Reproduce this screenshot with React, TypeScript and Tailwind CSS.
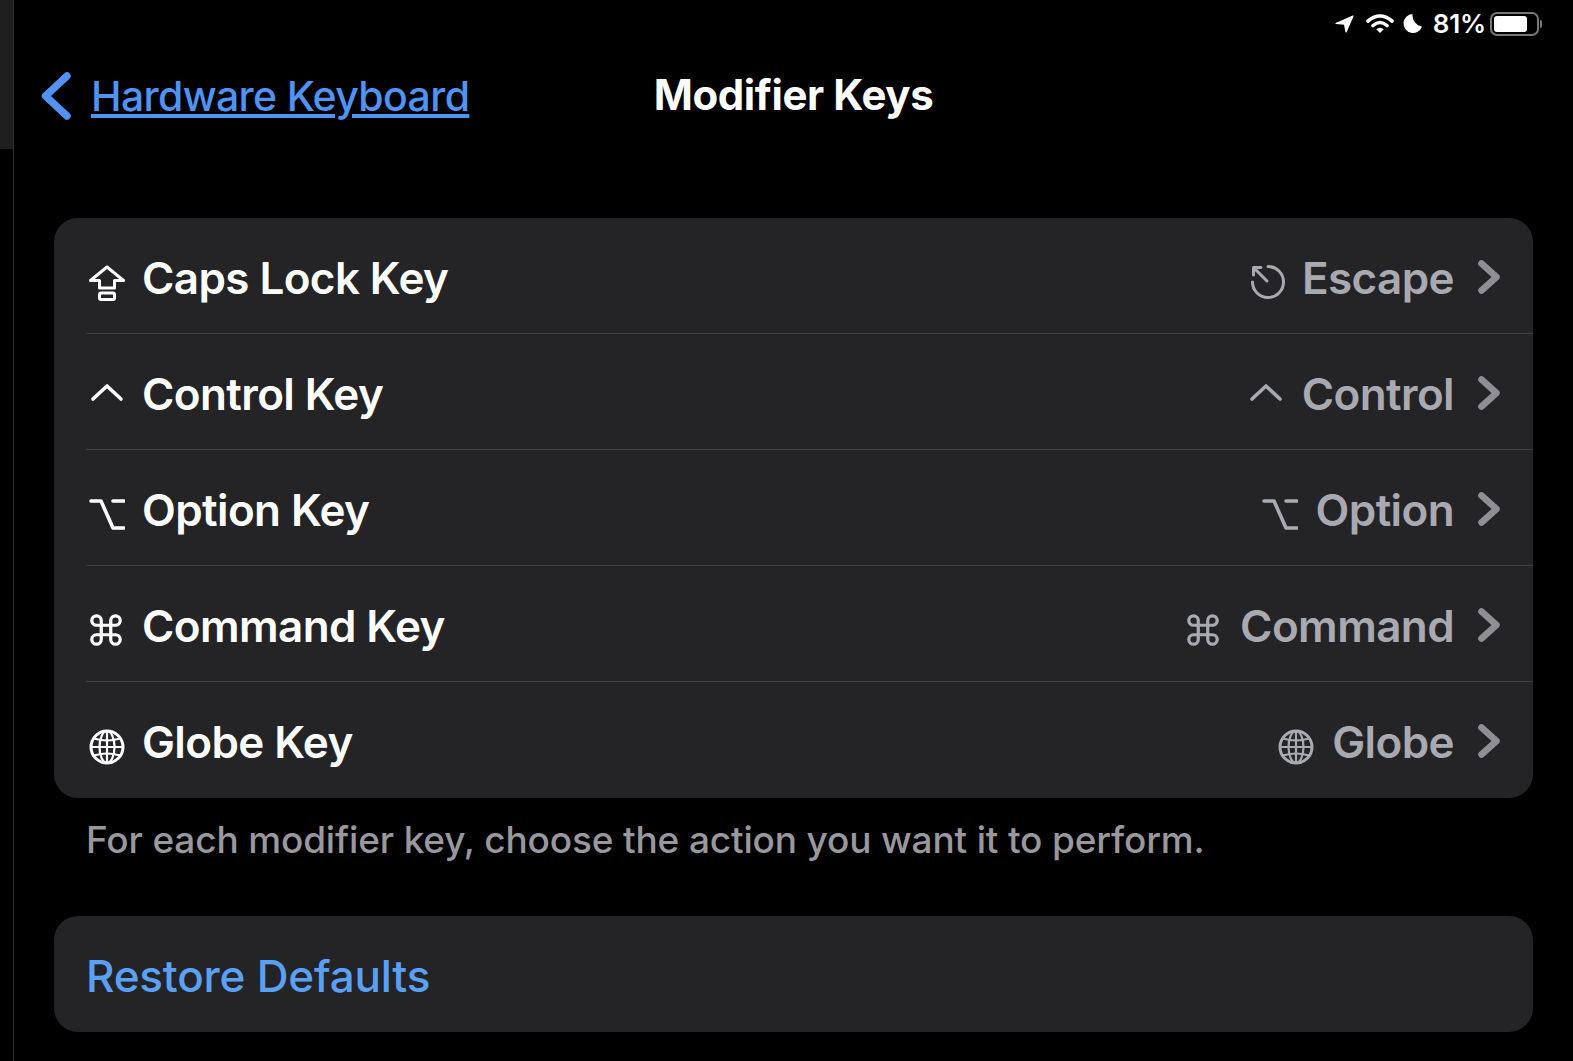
import React from 'react';

type IconProps = { className?: string };

const CapsIcon = ({ className }: IconProps) => (
  <svg viewBox="0 0 36 36" fill="none" stroke="currentColor" strokeWidth="3" strokeLinejoin="round" strokeLinecap="round" className={`translate-y-[5px] ${className}`}>
    <path d="M18 2 L34.5 15.5 L25.5 15.5 L25.5 23 L10.5 23 L10.5 15.5 L1.5 15.5 Z" />
    <rect x="10.5" y="28" width="15" height="6.5" rx="1.5" />
  </svg>
);

const ControlIcon = ({ className }: IconProps) => (
  <svg viewBox="0 0 36 36" fill="none" stroke="currentColor" strokeWidth="3.6" strokeLinejoin="round" strokeLinecap="round" className={`-translate-y-[1px] ${className}`}>
    <path d="M4 24 L18 11 L32 24" />
  </svg>
);

const OptionIcon = ({ className }: IconProps) => (
  <svg viewBox="0 0 36 36" fill="none" stroke="currentColor" strokeWidth="3.6" strokeLinejoin="round" strokeLinecap="round" className={`translate-y-[4px] ${className}`}>
    <path d="M2 5 L12 5 L24 32 L35 32" />
    <path d="M24 5 L35 5" />
  </svg>
);

const CommandIcon = ({ className }: IconProps) => (
  <svg viewBox="-1 -1 38 38" fill="none" stroke="currentColor" strokeWidth="3.4" strokeLinejoin="round" strokeLinecap="round" className={`-translate-x-[1px] translate-y-[4px] ${className}`}>
    <path d="M13 13 L23 13 L23 23 L13 23 Z" />
    <path d="M13 13 L13 8 A5 5 0 1 0 8 13 L13 13" />
    <path d="M23 13 L23 8 A5 5 0 1 1 28 13 L23 13" />
    <path d="M13 23 L13 28 A5 5 0 1 1 8 23 L13 23" />
    <path d="M23 23 L23 28 A5 5 0 1 0 28 23 L23 23" />
  </svg>
);

const GlobeIcon = ({ className }: IconProps) => (
  <svg viewBox="0 0 36 36" fill="none" stroke="currentColor" strokeWidth="2.2" className={`translate-y-[5px] ${className}`}>
    <circle cx="18" cy="18" r="16" strokeWidth="3" />
    <ellipse cx="18" cy="18" rx="7.5" ry="16" />
    <path d="M18 2 L18 34 M2 18 L34 18" />
    <path d="M5 9.5 Q18 13.5 31 9.5 M5 26.5 Q18 22.5 31 26.5" />
  </svg>
);

const EscapeIcon = ({ className }: IconProps) => (
  <svg viewBox="0 0 36 36" fill="none" stroke="currentColor" strokeWidth="3" strokeLinejoin="round" strokeLinecap="round" className={`translate-x-[2px] translate-y-[4px] ${className}`}>
    <path d="M18 2.5 A15.5 15.5 0 1 1 2.5 18" />
    <path d="M17 17 L4 4" />
    <path d="M3.5 11 L3.5 3.5 L11 3.5" />
  </svg>
);

const Chevron = () => (
  <svg viewBox="0 0 22 34" fill="none" stroke="currentColor" strokeWidth="6.6" strokeLinejoin="round" strokeLinecap="round" className="h-[34px] w-[22px] text-[#8e8e93]">
    <path d="M3.5 3.5 L18.5 17 L3.5 30.5" />
  </svg>
);

const rows = [
  { label: 'Caps Lock Key', value: 'Escape', Left: CapsIcon, Right: EscapeIcon },
  { label: 'Control Key', value: 'Control', Left: ControlIcon, Right: ControlIcon },
  { label: 'Option Key', value: 'Option', Left: OptionIcon, Right: OptionIcon },
  { label: 'Command Key', value: 'Command', Left: CommandIcon, Right: CommandIcon },
  { label: 'Globe Key', value: 'Globe', Left: GlobeIcon, Right: GlobeIcon },
];

const StatusBar = () => (
  <div className="flex h-[47px] items-center justify-end pr-[31px] text-white">
    <svg viewBox="0 0 18 17" fill="currentColor" stroke="currentColor" strokeWidth="1.2" strokeLinejoin="round" className="h-[18px] w-[19px]">
      <path d="M17 1 L1 8 L9 8.6 L10.5 16 Z" />
    </svg>
    <svg viewBox="0 0 28 19" className="ml-[12px] h-[19px] w-[28px]" fill="none" stroke="currentColor" strokeWidth="3.6" strokeLinecap="round">
      <path d="M2 7 Q14 -3 26 7" />
      <path d="M7 11.5 Q14 5.5 21 11.5" />
      <path d="M14 19 L10.2 15.2 Q14 12.2 17.8 15.2 Z" fill="currentColor" stroke="none" />
    </svg>
    <svg viewBox="0 0 18 18" fill="currentColor" className="ml-[9px] h-[19px] w-[19px]">
      <path d="M9 0 A9 9 0 1 0 18 12 A11 11 0 0 1 9 0 Z" />
    </svg>
    <span className="ml-[11px] text-[26px] leading-none font-semibold tracking-[-0.2px]">81%</span>
    <div className="ml-[4px] flex items-center">
      <div className="h-[24px] w-[49px] rounded-[7px] border-2 border-[#77777a] p-[2px]">
        <div className="h-full w-[33px] rounded-[3px] bg-white" />
      </div>
      <div className="ml-[1px] h-[8px] w-[2px] rounded-r-sm bg-[#77777a]" />
    </div>
  </div>
);

export default function App() {
  return (
    <div className="flex h-[1061px] w-[1573px] overflow-hidden bg-black [font-family:Inter,sans-serif]">
      <div className="w-[14px] shrink-0 border-r border-[#2c2c2e]">
        <div className="h-[149px] bg-[#1f1f1f]" />
      </div>

      <div className="flex-1">
        <StatusBar />

        <div className="grid h-[98px] grid-cols-[1fr_auto_1fr] items-center">
          <div className="flex items-center pl-[27px] text-[#4f93f5]">
            <svg viewBox="0 0 30 48" fill="none" stroke="currentColor" strokeWidth="7.4" strokeLinejoin="round" strokeLinecap="round" className="h-[48px] w-[30px]">
              <path d="M26 4 L4.5 24 L26 44" />
            </svg>
            <span className="ml-[20px] text-[41px] leading-none font-medium tracking-[-0.65px] underline decoration-[3.5px] underline-offset-[3px]">Hardware Keyboard</span>
          </div>
          <div className="pb-[2px] text-[42px] leading-none font-bold tracking-[-0.4px] text-white">Modifier Keys</div>
          <div />
        </div>

        <div className="mt-[73px] pr-[40px] pl-[40px]">
          <div className="overflow-hidden rounded-[24px] bg-[#242426]">
            {rows.map(({ label, value, Left, Right }, i) => (
              <div key={label} className="pl-[32px]">
                <div className={`flex h-[116px] items-center pt-[4px] pr-[33px] ${i < rows.length - 1 ? 'border-b border-[#3e3e40]' : ''}`}>
                  <Left className="ml-[3px] h-[36px] w-[36px] text-white" />
                  <span className="ml-[17px] text-[44px] leading-none font-semibold tracking-[-0.6px] text-white">{label}</span>
                  <div className="ml-auto flex items-center text-[#a9a9b2]">
                    <Right className="h-[36px] w-[36px]" />
                    <span className="ml-[18px] text-[44px] leading-none font-semibold tracking-[-0.6px]">{value}</span>
                  </div>
                  <div className="ml-[24px] -translate-y-[1px]">
                    <Chevron />
                  </div>
                </div>
              </div>
            ))}
          </div>

          <p className="mt-[22px] pl-[32px] text-[37px] leading-[40px] font-medium tracking-[-0.15px] text-[#98989e]">
            For each modifier key, choose the action you want it to perform.
          </p>

          <div className="mt-[56px] flex h-[116px] items-center rounded-[24px] bg-[#242426] pt-[3px] pl-[32px]">
            <span className="text-[44px] leading-none font-medium tracking-[-0.2px] text-[#5aa0f7]">Restore Defaults</span>
          </div>
        </div>
      </div>
    </div>
  );
}
